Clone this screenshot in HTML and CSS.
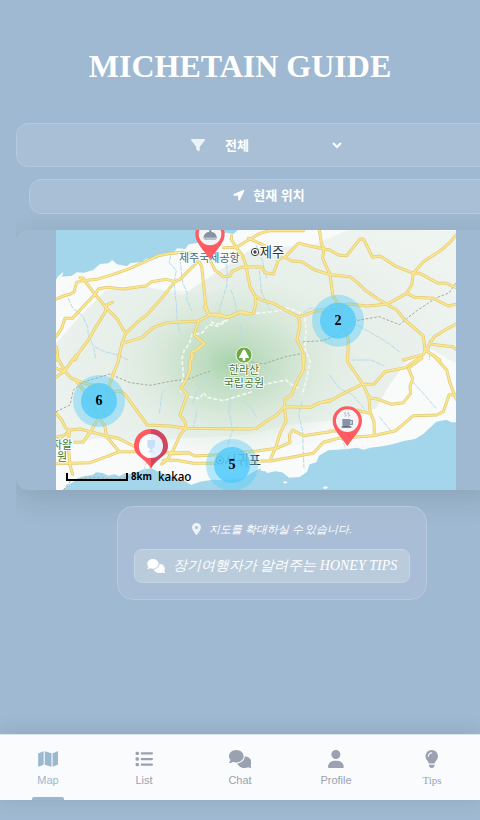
FILE: index.html
```html
<!DOCTYPE html>
<html lang="ko">
<head>
<meta charset="utf-8">
<meta name="viewport" content="width=device-width, initial-scale=1">
<title>MICHETAIN GUIDE</title>
<link rel="stylesheet" href="styles.css">
</head>
<body>
<h1 class="title">MICHETAIN GUIDE</h1>
<main class="page">
  <div class="content">
  <div class="filter">
    <svg class="filter-icon" viewBox="0 0 512 512" aria-hidden="true"><path d="M4 54C9 41 22 32 36 32h440c14 0 27 9 32 22s4 28-5 39L320 320v128c0 12-7 23-18 29s-24 4-34-3l-64-48c-8-6-12-16-12-26v-80L9 93C0 82-2 67 4 54z"/></svg>
    <label class="sr-only" for="category">카테고리</label>
    <select id="category" class="filter-select"><option>전체</option><option>맛집</option><option>카페</option></select>
  </div>

  <button type="button" class="locate"><svg class="locate-icon" viewBox="0 0 448 512" aria-hidden="true"><path d="M429 84c9-11 10-28 0-39-10-12-26-16-40-10L21 195C6 202-3 218 1 234s18 28 35 28h156v156c0 17 12 31 28 34s32-5 39-20z"/></svg>현재 위치</button>

  <section class="map-card" aria-label="지도">
    <svg class="map" viewBox="0 0 1200 780" role="img" aria-label="제주도 지도">
      <defs>
        <radialGradient id="hill" gradientUnits="userSpaceOnUse" cx="530" cy="400" r="440" gradientTransform="translate(0 110) scale(1 .72)">
          <stop offset="0" stop-color="#a6d3aa"/><stop offset=".2" stop-color="#bfddc2"/><stop offset=".5" stop-color="#d8e8da"/><stop offset="1" stop-color="#edf3ef" stop-opacity="0"/>
        </radialGradient>
        <radialGradient id="slope" gradientUnits="userSpaceOnUse" cx="560" cy="380" r="800" gradientTransform="translate(0 155) scale(1 .6)">
          <stop offset="0" stop-color="#dce9df"/><stop offset=".75" stop-color="#ecf2ee"/><stop offset="1" stop-color="#eff4f1"/>
        </radialGradient>
        <symbol id="pin" viewBox="0 0 90 124" overflow="visible"><path fill="#ff5b60" d="M45 2C20 2 1 21 1 45c0 27 23 45 44 76 21-31 44-49 44-76C89 21 70 2 45 2z"/><circle cx="45" cy="45" r="34" fill="#f4f5f7"/></symbol>
        <g id="roads">
          <g transform="translate(-18 -15)">
            <path d="M18 222L40 213 62 207 72 200 80 172 100 167 140 163 190 148 240 130 290 108 325 92 355 86 400 82 440 86"/>
            <path d="M90 158l10 2 8 12 27 36 35 42 30 30 15 25 12 20-12 35-10 45"/>
            <path d="M18 335l17-25 10-30h23l22-25 45-47 10-16 25-5 50 5 70-10 15-12 45-7 25 7 15-7 55-55"/>
            <path d="M375 170l-40 50-45 50-20 15-43 40M187 232l-17 8-5 22-30 48-20 35-30 40-10 20M18 365q8 20 3 40"/>
            <path d="M215 356l60-18 35-30 40-15 95-5 25-13 10-7h30l20 9 15-5 25-12 30 6"/>
            <path d="M447 108l8 17 7 65 6 60 7 15M445 290l-13 40 31 25-23 20-15 7v23M462 245l13 20M468 246l7 19"/>
          </g>
          <g transform="translate(342 -15)">
            <path d="M120 105l15 30 25 20 20-2 5-13 30-13 60-2 10 18 25 4 15-42 10-7M160 68l40-1 35-22 35-20 30-8h100M235 40l35 15 25 14"/>
            <path d="M185 32l-2 10 17 28 17 20 11 30 4 25 8 40 15 27 3 23-8 30-20 2-20-5-35 15-60-9M255 212l20 13 35 10 30 17 45 23 5 25-9 45 17 35 2 40"/>
          </g>
          <g transform="translate(582 -15)">
            <path d="M105 97l40-42 75 17 20 3 25 15 25 2 40-50h10l28 55 22-4 50 32 50 20h20l55 30h25l28 13"/>
            <path d="M105 97l20 11 30 2 40 25 45 14 60 6 25 20 20 20 35 25 30 18 30 17 25 30 55 48 5 42 45 30"/>
            <path d="M208 15l7 45 7 10-4 30 22 49 8 61 17 30 20 70 10 35-2 60"/>
            <path d="M618 30l-18 22-30 26-50 32-30 35-5 35-15 25-60 33-60 5-50-6-35 3-25 17-45 1-45 17M470 205l25 12 55 3 45 23 23-5"/>
            <path d="M618 297l-38 21-27 17-26 40-7 13-60 17M545 358l63 7 10 8"/>
          </g>
          <g transform="translate(-18 375)">
            <path d="M18 40l27 10 20 20 40 15 45 10 30 15 30-2 15 10 67 92 68 3 45 7 200 2M18 67l27-20L78 0M45 47L18 0"/>
            <path d="M208 0l-3 20-15 35-12 35-6 30-7 40-20 30-20 35-25 35M75 72l25 33 30 45 20 40 15 25 5 30 38 45h52"/>
            <path d="M18 175l17 20 10 20 13 15-3 50 5 50 8 28M18 245l22-2 20-18 30-3 30 8 50 13 35 7 50 25M18 262l14-14M75 262h23l22-30M18 326l102-3 50-18 38-15"/>
            <path d="M335 327l15-11 20-31 20-45 18-20-3-20-15-20 10-30 12-32-19-20 15-23 12-30V20l10-20M340 316h40l50 9h70M350 293h65"/>
          </g>
          <g transform="translate(342 375)">
            <path d="M0 297l55-4 20 10 55-3 130-12 60-8 40-18-2-22 10-15 32 17 80-12M160 318h140l85-15 45-8 30-33 20-4"/>
            <path d="M300 316l18-41 12-40 18-35-5-45 2-23 20-12 15-40 20-35 3-45M200 221l60-1 35-25 25-15 23-25 77 2 30-14 30-5"/>
          </g>
          <g transform="translate(582 375)">
            <path d="M180 157l30-14 40-10 25-15 60-30 37-1 33-37 60-12 50-33M292 0v20l28 40 20 30 17 38 3 42 12 30 1 40"/>
            <path d="M357 128l28 5 40 15 35-5 22-28-2-20 8-25-13-30 40-30M550 0l40 45 10 40 18 47M618 118l-21 2-17 50-20 10-70 2-53 45-67 15-105 8-40 10M240 228h20M320 165l37 10"/>
          </g>
        </g>
      </defs>
      <rect width="1200" height="780" fill="#f9fafa"/>
      <path fill="url(#slope)" d="M0 340l70-80 80-80 120-10 110 25 90-60 120-80 180-10 120-50 380 10v340l-60 60-90-50-60 30-60 80-40 70-80 30-180 20-130 30-180 10-140 10-120-10-120 20-130-20z"/>
      <path fill="url(#hill)" d="M80 250l130-80 250 20 110-50 250 0 200 60 60 190-60 140-200 100-250 40-260 0-210-80z"/>
      <g fill="#a3d6eb">
        <path d="M0 0h546l-14 12-24-4-20 15-40-4-12 18-38 6-10 14-24-2-18 20-30-1-14 12-32 0-12 10-35 3-10 10-30-6-14-13-12 10-25 2-20 18-28 8-22-1-14 10-30 3 4-14-14 11-12 18-4 16-16 0-4 8-16-2-10 16-2 18-28 6L0 198z"/>
        <path d="M22 780l14-16 16-8 14-12 20-6 24-3 10-8 20 2 16 8 20-4 14 6 18-10 20 4 30-14 27-4 30 14 36 12 40 14 14 10 26-10 40-6 30 2 60-8 40-22 14-6 20 14 22-5 22 3 20 16 32-2 22-16 8-22 20-6 8-20 28-16 26-2 30-2 30-4 20 6 20-6 36-4 30-6 34-10 34-6 24-14 40-38 30-6 14 8 26 0 28-10 14-2V780z"/>
        <path d="M610 712l10-6 8 8-2 10-10-2zM680 757l7-4 8 4-6 4zM800 772l10-4 6 5-10 5z" fill="#f9fafa"/>
      </g>
      <g class="streams">
        <path d="M36 204l14 30 30 24 15 34 2 24 16 34 6 38M116 350l30 15 40 10 30 15M345 75l-6 22 22 25-7 35 7 65 2 45 8 38M372 88l8 70 14 32-2 20 16 33M505 85l8 25 0 55-20 65-6 25M525 180l12 34 4 30M555 280v55M740 250l20-15 70 0 40 15 34 20M890 280l50 25 50 30 40 30M1120 330v60M610 120l6 65 28 60M600 45l20 50 12 50M885 390l60 0 40 18"/>
        <path d="M310 550l8-60 10-14M410 600l14-60M530 480l-12 60 12 60-15 45M310 630l-22 50M738 514l-10 40 12 50 2 70 2 40M855 620l20 50M820 435l30 40 40 20 34 40M1070 455l40 45 30 35M970 560l20 25 20 25M290 680l-22 24-6 40M410 520l20-50 30-34M560 510l30 30 10 20"/>
      </g>
      <path class="trail" d="M0 545l42-20 10-45 30-24 80-24 60 26 60 8 60-12 60-8 40-16 20-6M560 390l60 12 70-22 50-10M740 336l60-4 50-20 30-30 30-12 60-10 60 24 50-40 60-40 40-16 20-30M22 780l24-30 70-8 60 6 50-8"/>
      <path class="park" d="M465 275l15 9 36-15-30 20-28-5-20 25-30 5-8 26-16 22-6 24 4 50-8 52M400 500l30 6 14-18 8 14 50 10 90-28M600 250l60-6 36-10 50 20 4 50-4 50 16 40-12 60-12 40M600 470l40-10 50-10 20 16 20 10"/>
      <use href="#roads" class="road-edge"/>
      <use href="#roads" class="road-core"/>
      <g class="green-label"><circle cx="564" cy="375" r="24" fill="#6aab46" stroke="#eef5ed" stroke-width="3"/><path d="M564 358q9 6 9 14 5 6 6 12h-11v8h-8v-8h-11q1-6 6-12 0-8 9-14z" fill="#fff"/>
        <text x="564" y="432">한라산</text><text x="564" y="470">국립공원</text><text x="18" y="657">자왈</text><text x="18" y="694">원</text></g>
      <g class="city-label"><text class="airport" x="460" y="95">제주국제공항</text><circle cx="597" cy="66" r="11"/><circle class="dot" cx="597" cy="66" r="5"/><text x="648" y="81">제주</text>
      <text x="560" y="705">서귀포</text><circle cx="492" cy="691" r="11"/><circle class="dot" cx="492" cy="691" r="5"/></g>
      <use href="#pin" x="417" y="-33" width="90" height="124"/>
      <path fill="#8793a4" d="M442 23q3-17 18-18v-5h6v5q14 2 17 18z"/><path fill="#a7b0bc" d="M441 25h43l-5 4h-33z"/>
      <use href="#pin" x="829" y="527" width="90" height="124"/>
      <path fill="#8693a8" d="M859 567h24v3h8v15h-9q-2 6-8 6h-8q-7 0-7-6zM883 574v7h4v-7z"/><path fill="#4e5664" d="M857 589h29v4h-29z"/><path class="steam" d="M869 546q-7 2-1 7t-2 6M879 546q-7 2-1 7t-2 6"/>
      <path fill="#ff5b60" d="M285 597c-30 0-51 23-51 51 0 31 34 36 51 68z"/><path fill="#cf4663" d="M285 597c30 0 51 23 51 51 0 31-34 36-51 68z"/><circle cx="285" cy="648" r="36" fill="#e6f1fd"/><path fill="#fafcff" d="M285 612a36 36 0 0 0 0 72z"/><path fill="#c6e0f8" d="M274 630h23v18q-3 8-10 9v6h6v4h-16v-4h6v-6q-8-2-9-9z"/>
      <g class="cluster"><circle class="halo" cx="846" cy="272" r="78"/><circle cx="846" cy="272" r="54"/><text x="846" y="285">2</text><circle class="halo" cx="129" cy="513" r="78"/><circle cx="129" cy="513" r="54"/><text x="129" y="525">6</text><circle class="halo" cx="528" cy="705" r="78"/><circle cx="528" cy="705" r="54"/><text x="528" y="716">5</text></g>
      <path class="scale" d="M33 729v21h180v-21"/><text class="scale-text" x="225" y="751">8km</text><text class="kakao" x="306" y="752">kakao</text>
    </svg>
  </section>

  <section class="info">
    <p class="hint"><svg class="hint-icon" viewBox="0 0 384 512" aria-hidden="true"><path fill-rule="evenodd" d="M216 499C267 435 384 279 384 192 384 86 298 0 192 0S0 86 0 192c0 87 117 243 168 307 12 15 36 15 48 0zM192 128a64 64 0 1 1 0 128 64 64 0 1 1 0-128z"/></svg>지도를 확대하실 수 있습니다.</p>
    <a href="#tips" class="tips-link"><svg class="chat-icon" viewBox="0 0 640 512" aria-hidden="true"><use href="#chat"/></svg><span>장기여행자가 알려주는 HONEY TIPS</span></a>
  </section>
  </div>
</main>

<nav class="tabs">
  <a href="#map" class="tab active" aria-current="page"><svg viewBox="0 0 576 512" aria-hidden="true"><path d="M384 476L192 421V36l192 55zM416 475V90l123-49c16-7 33 5 33 22v335c0 10-6 19-15 22zM15 95l145-58v385L37 471c-16 7-33-5-33-22V117c0-10 4-18 11-22z"/></svg>Map</a>
  <a href="#list" class="tab"><svg viewBox="0 0 512 512" aria-hidden="true"><rect x="16" y="48" width="96" height="96" rx="36"/><rect x="16" y="208" width="96" height="96" rx="36"/><rect x="16" y="368" width="96" height="96" rx="36"/><rect x="160" y="64" width="352" height="64" rx="32"/><rect x="160" y="224" width="352" height="64" rx="32"/><rect x="160" y="384" width="352" height="64" rx="32"/></svg>List</a>
  <a href="#chat-room" class="tab"><svg viewBox="0 0 640 512" aria-hidden="true"><path id="chat" d="M208 352c115 0 208-79 208-176S323 0 208 0 0 79 0 176c0 39 15 74 40 103-3 37-18 50-35 67-9 10-4 22 10 22 36 0 69-15 91-28 31 8 66 12 102 12zM448 176c0 112-99 196-213 207 24 74 109 129 213 129 37 0 71-7 102-20 22 13 55 20 91 20 14 0 19-12 10-22-17-17-32-30-35-59 15-20 24-46 24-79 0-90-81-165-192-176z"/></svg>Chat</a>
  <a href="#profile" class="tab"><svg viewBox="0 0 448 512" aria-hidden="true"><path d="M224 256a128 128 0 1 0 0-256 128 128 0 1 0 0 256zM178 304C80 304 0 384 0 482c0 16 13 30 30 30h388c17 0 30-14 30-30 0-98-80-178-178-178z"/></svg>Profile</a>
  <a href="#tips" class="tab tips"><svg viewBox="0 0 384 512" aria-hidden="true"><path fill-rule="evenodd" d="M272 384c10-31 29-58 49-85 33-45 47-77 47-123C368 79 289 0 192 0S16 79 16 176c0 46 14 78 47 123 20 27 39 54 49 85zM192 512c44 0 80-36 80-80v-16H112v16c0 44 36 80 80 80zM112 176c0 9-7 16-16 16s-16-7-16-16c0-62 50-112 112-112 9 0 16 7 16 16s-7 16-16 16c-44 0-80 36-80 80z"/></svg>Tips</a>
</nav>
</body>
</html>
```
FILE: styles.css
```css
* { box-sizing: border-box; }

body {
  margin: 0;
  min-height: 100vh;
  display: flex;
  flex-direction: column;
  overflow-x: hidden;
  background: #9eb9d1;
  color: #fff;
  font-family: "Liberation Sans", "Noto Sans CJK KR", sans-serif;
}

.page {
  flex: 1;
  margin-left: 16px;
  overflow: hidden;
}

.content { width: calc(100vw + 32px); }

.title {
  margin: 45px 0 36px;
  font: 700 32px/42px "Liberation Serif", serif;
  text-align: center;
}

.filter,
.locate,
.map-card {
  width: 100vw;
}

.filter,
.locate {
  display: flex;
  align-items: center;
  justify-content: center;
  border: 1px solid #b5cade;
  border-radius: 12px;
  background: #a9bfd5;
}

.filter {
  height: 44px;
  padding-left: 24px;
  gap: 12px;
}

svg { fill: currentColor; }

.filter-icon {
  width: 14px;
  height: 14px;
  opacity: .8;
}

.filter-select {
  width: 128px;
  padding: 0 4px;
  border: 0;
  background: transparent;
  color: #fff;
  font: 700 13px/20px "Liberation Sans", "Noto Sans CJK KR", sans-serif;
}

.locate {
  height: 35px;
  margin: 12px 0 16px 13px;
  padding: 0 0 2px;
  gap: 8px;
  color: #fff;
  font: 700 13px/20px "Liberation Sans", "Noto Sans CJK KR", sans-serif;
}

.locate-icon {
  width: 12px;
  height: 13px;
}

.map-card {
  padding: 0 40px;
  border-radius: 12px;
  box-shadow: 0 8px 32px rgba(0, 0, 0, .12);
  background: #9eb9d1;
}

.map {
  display: block;
  width: 100%;
}

.road-edge,
.road-core { fill: none; stroke-linejoin: round; stroke-linecap: round; }
.road-edge { stroke: #dfca78; stroke-width: 9; }
.road-core { stroke: #fce68c; stroke-width: 5; }
.streams { fill: none; stroke: #b5dcec; stroke-width: 3; stroke-dasharray: 16 3; }
.trail { fill: none; stroke: #a9aca0; stroke-width: 3; stroke-dasharray: 8 5; }
.park { fill: none; stroke: #f4f8f2; stroke-width: 5; stroke-dasharray: 12 6; }

.green-label text {
  fill: #47782f;
  stroke: #fff;
  stroke-width: 5px;
  paint-order: stroke;
  text-anchor: middle;
  font: 400 33px "Noto Sans CJK KR", sans-serif;
}

.city-label text {
  fill: #333;
  stroke: #fff;
  stroke-width: 5px;
  paint-order: stroke;
  text-anchor: middle;
  font: 400 40px "Noto Sans CJK KR", sans-serif;
}

.city-label .airport { fill: #3f6680; font-size: 33px; }
.city-label circle { fill: #fff; stroke: #444; stroke-width: 3; }
.city-label .dot { fill: #444; stroke: none; }
.steam { fill: none; stroke: #aab0ba; stroke-width: 3; }
.cluster circle { fill: #51cbfb; fill-opacity: .8; }
.cluster .halo { fill-opacity: .4; }
.cluster text { fill: #000; font: 700 42px "Liberation Serif", serif; text-anchor: middle; }
.scale { fill: none; stroke: #000; stroke-width: 6; }
.scale-text { fill: #000; font: 700 29px "Noto Sans", sans-serif; }
.kakao { fill: #000; font: 500 35px "Noto Sans", sans-serif; }

.info {
  width: fit-content;
  margin: 16px auto 0;
  padding: 12px 16px 16px;
  border: 1px solid #b5cade;
  border-radius: 16px;
  background: rgba(176, 194, 217, .6);
  font-family: "Liberation Serif", serif;
  font-style: italic;
}

.hint {
  display: flex;
  align-items: center;
  justify-content: center;
  gap: 8px;
  margin: 0 0 10px;
  font-size: 11px;
  line-height: 20px;
}

.hint-icon { width: 9px; height: 12px; opacity: .8; }

.tips-link {
  display: flex;
  align-items: center;
  gap: 8px;
  padding: 6px 12px;
  border: 1px solid #c5d5e3;
  border-radius: 8px;
  background: #baccdc;
  color: #fff;
  font-size: 14px;
  line-height: 20px;
  text-decoration: none;
}

.chat-icon { width: 18px; height: 14px; }

.tabs {
  display: flex;
  height: 66px;
  margin-bottom: 20px;
  border-top: 1px solid #dbe5ee;
  background: #fafbfd;
  box-shadow: 0 -2px 20px rgba(0, 0, 0, .1);
}

.tab {
  flex: 1;
  display: flex;
  flex-direction: column;
  align-items: center;
  padding-top: 15px;
  gap: 6px;
  color: #9aa1b0;
  font-size: 11px;
  line-height: 12px;
  text-decoration: none;
}

.tab svg { height: 18px; }
.tab.active { color: #9bb8d1; }
.tab.active::after { content: ""; width: 32px; height: 3px; margin-top: auto; border-radius: 2px 2px 0 0; background: #9bb8d1; }
.tips { font-family: "Liberation Serif", serif; }

.sr-only {
  position: absolute;
  width: 1px;
  height: 1px;
  overflow: hidden;
  clip-path: inset(50%);
}
```
